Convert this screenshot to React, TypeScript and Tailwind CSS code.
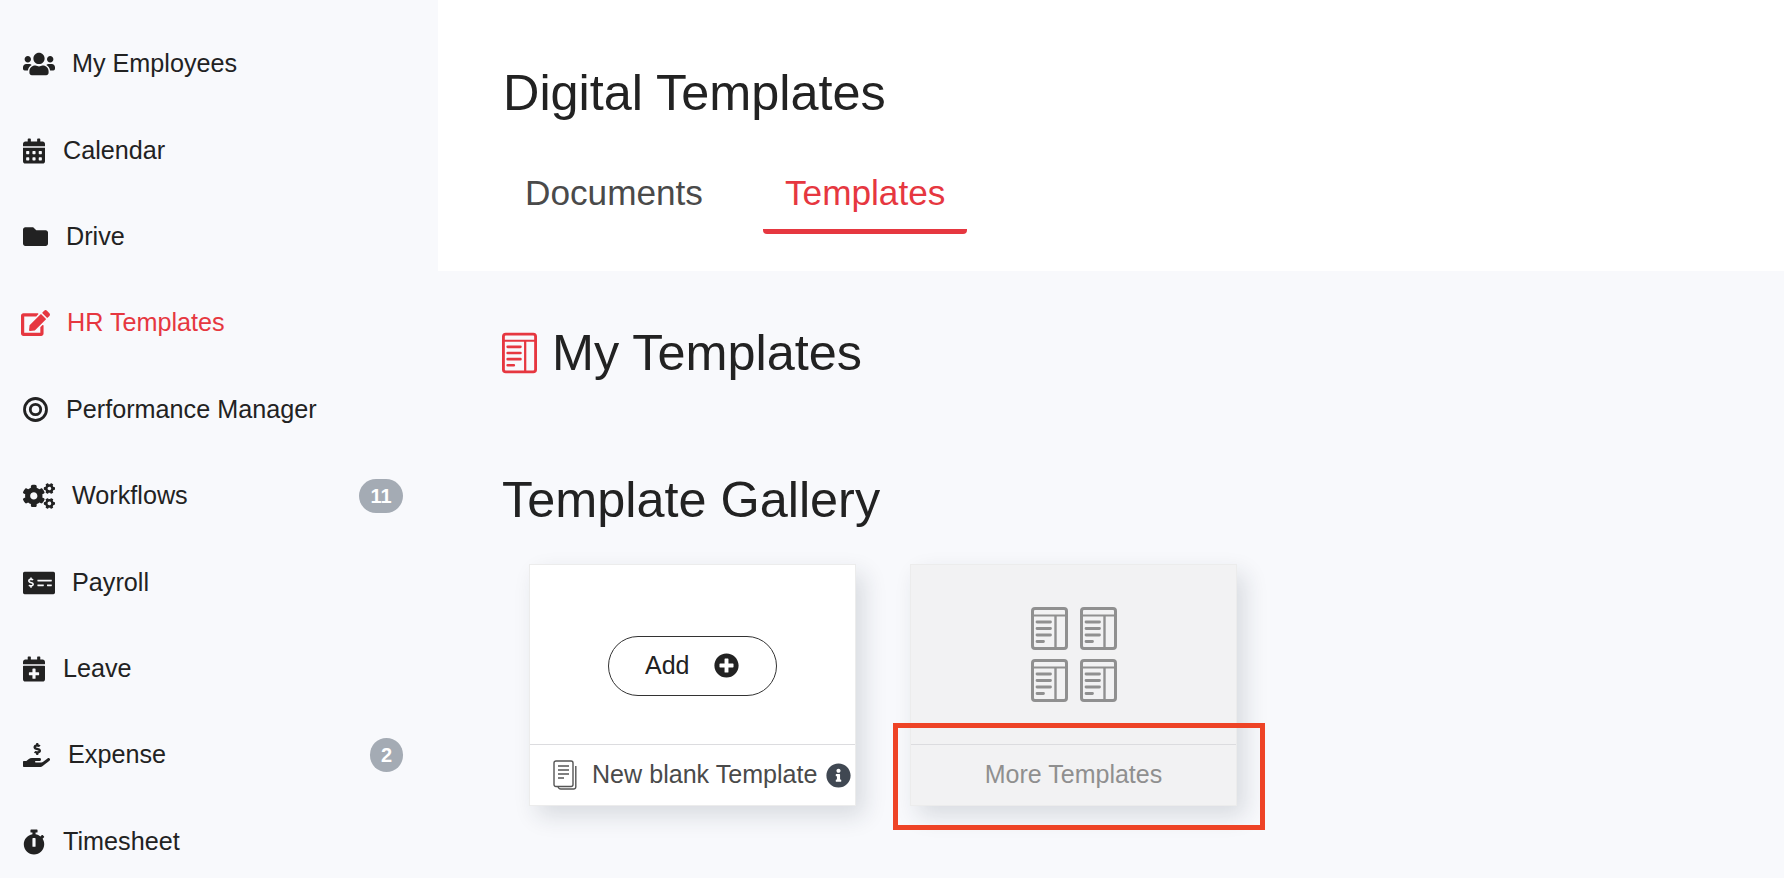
import type { ReactNode } from 'react'
import {
  FaCalendarAlt,
  FaCalendarPlus,
  FaCogs,
  FaEdit,
  FaFolder,
  FaHandHoldingUsd,
  FaInfoCircle,
  FaMoneyCheckAlt,
  FaPlusCircle,
  FaStopwatch,
  FaUsers,
} from 'react-icons/fa'

interface NavItem {
  label: string
  icon: ReactNode
  active?: boolean
  badge?: string
}

function TargetIcon({ className }: { className: string }) {
  return (
    <svg viewBox="0 0 25 25" className={className} fill="none" stroke="currentColor">
      <circle cx="12.5" cy="12.5" r="11" strokeWidth="2.8" />
      <circle cx="12.5" cy="12.5" r="5.2" strokeWidth="2.8" />
    </svg>
  )
}

// Icono de plantilla: marco, barra superior, columna derecha y lineas de texto.
function TemplateIcon({ className }: { className: string }) {
  return (
    <svg viewBox="0 0 37 43" className={className} fill="none" stroke="currentColor" strokeLinecap="round">
      <rect x="1.5" y="1.5" width="34" height="40" rx="2.5" strokeWidth="3" />
      <path d="M1.5 8.5H35.5" strokeWidth="2" />
      <path d="M24.5 8.5V41.5" strokeWidth="2.4" strokeLinecap="butt" />
      <path d="M6 15H19.5M6 21.5H19.5M6 28H19.5M6 34.5H12.5" strokeWidth="2.8" />
    </svg>
  )
}

function DocsIcon({ className }: { className: string }) {
  return (
    <svg viewBox="0 0 24 30" className={className} fill="none" stroke="currentColor" strokeWidth="1.4">
      <rect x="1" y="1" width="19" height="25.5" rx="2" />
      <path d="M22.8 6V27A2.2 2.2 0 0 1 20.6 29H8A3 3 0 0 1 5 26.5" />
      <path d="M5 6H16M5 10H16M5 14H16M5 18H11" strokeWidth="1.6" />
    </svg>
  )
}

const navItems: NavItem[] = [
  { label: 'My Employees', icon: <FaUsers className="w-[32px] h-[26px] mr-[17px]" /> },
  { label: 'Calendar', icon: <FaCalendarAlt className="w-[22px] h-[26px] mr-[18px]" /> },
  { label: 'Drive', icon: <FaFolder className="w-[25px] h-[25px] mr-[18px]" /> },
  { label: 'HR Templates', icon: <FaEdit className="w-[29px] h-[26px] mr-[17px] -ml-[2px]" />, active: true },
  { label: 'Performance Manager', icon: <TargetIcon className="w-[25px] h-[25px] mr-[18px]" /> },
  { label: 'Workflows', icon: <FaCogs className="w-[32px] h-[26px] mr-[17px]" />, badge: '11' },
  { label: 'Payroll', icon: <FaMoneyCheckAlt className="w-[32px] h-[26px] mr-[17px]" /> },
  { label: 'Leave', icon: <FaCalendarPlus className="w-[22px] h-[26px] mr-[18px]" /> },
  { label: 'Expense', icon: <FaHandHoldingUsd className="w-[27px] h-[26px] mr-[18px]" />, badge: '2' },
  { label: 'Timesheet', icon: <FaStopwatch className="w-[22px] h-[26px] mr-[18px]" /> },
]

export default function App() {
  return (
    <div className="flex h-[878px] w-[1784px] overflow-hidden bg-[#f8f9fc] text-[#222222] font-['Liberation_Sans',Arial,sans-serif]">
      {/* Sidebar */}
      <aside className="w-[438px] shrink-0 pt-[21px] pl-[23px] pr-[35px]">
        {navItems.map((item) => (
          <div
            key={item.label}
            className={`flex h-[86.4px] items-center text-[25.2px] ${item.active ? 'text-[#e63740]' : 'text-[#222222]'}`}
          >
            {item.icon}
            <span>{item.label}</span>
            {item.badge && (
              <span
                className={`ml-auto flex h-[34px] items-center justify-center rounded-full bg-[#a4abb4] text-[20px] font-bold text-white ${
                  item.badge.length > 1 ? 'w-[44px]' : 'w-[33px]'
                }`}
              >
                {item.badge}
              </span>
            )}
          </div>
        ))}
      </aside>

      {/* Contenido */}
      <main className="flex-1">
        <header className="h-[271px] bg-white pl-[65px] pt-[63px]">
          <h1 className="text-[50.4px] leading-[60px]">Digital Templates</h1>
          <div className="mt-[49px] flex gap-[38px] text-[35.2px] leading-[42px]">
            <div className="px-[22px] text-[#4a4a4a]">Documents</div>
            <div className="px-[22px] text-[#e63740] relative">
              Templates
              <div className="absolute left-0 right-0 top-[57px] h-[5px] rounded-b-[4px] bg-[#e63740]" />
            </div>
          </div>
        </header>

        <section className="pl-[64px] pt-[52px]">
          <div className="flex items-center">
            <TemplateIcon className="w-[35px] h-[42px] text-[#e63740]" />
            <h2 className="ml-[15px] text-[50.4px] leading-[60px]">My Templates</h2>
          </div>
          <h2 className="mt-[87px] text-[50.4px] leading-[60px]">Template Gallery</h2>

          <div className="mt-[34px] ml-[27px] flex gap-[54px]">
            <div className="flex h-[242px] w-[327px] flex-col border border-[#ececec] bg-white shadow-[8px_10px_22px_rgba(30,40,60,0.14)]">
              <div className="flex flex-1 items-center justify-center pt-[22px]">
                <button className="flex h-[60px] w-[169px] items-center rounded-full border border-[#333333] pl-[36px] text-[25px]">
                  Add
                  <FaPlusCircle className="ml-[25px] h-[25px] w-[25px]" />
                </button>
              </div>
              <div className="flex h-[61px] items-center border-t border-[#dcdcdf] pl-[23px] text-[25.1px] text-[#4a4a4a]">
                <DocsIcon className="h-[30px] w-[24px] text-[#555555]" />
                <span className="ml-[15px]">New blank Template</span>
                <FaInfoCircle className="ml-[8px] h-[25px] w-[25px] text-[#404852]" />
              </div>
            </div>

            <div className="relative flex h-[242px] w-[327px] flex-col border border-[#ececec] bg-[#f2f2f3] shadow-[8px_10px_22px_rgba(30,40,60,0.14)]">
              <div className="flex flex-1 items-center justify-center">
                <div className="grid grid-cols-2 gap-x-[12px] gap-y-[9px] text-[#909090]">
                  <TemplateIcon className="w-[37px] h-[43px]" />
                  <TemplateIcon className="w-[37px] h-[43px]" />
                  <TemplateIcon className="w-[37px] h-[43px]" />
                  <TemplateIcon className="w-[37px] h-[43px]" />
                </div>
              </div>
              <div className="flex h-[61px] items-center justify-center border-t border-[#dcdcdf] text-[25px] text-[#8f8f8f]">
                More Templates
              </div>
              {/* Recuadro rojo de anotacion */}
              <div className="absolute -left-[18px] top-[158px] h-[107px] w-[372px] border-[5px] border-[#ee4326]" />
            </div>
          </div>
        </section>
      </main>
    </div>
  )
}
